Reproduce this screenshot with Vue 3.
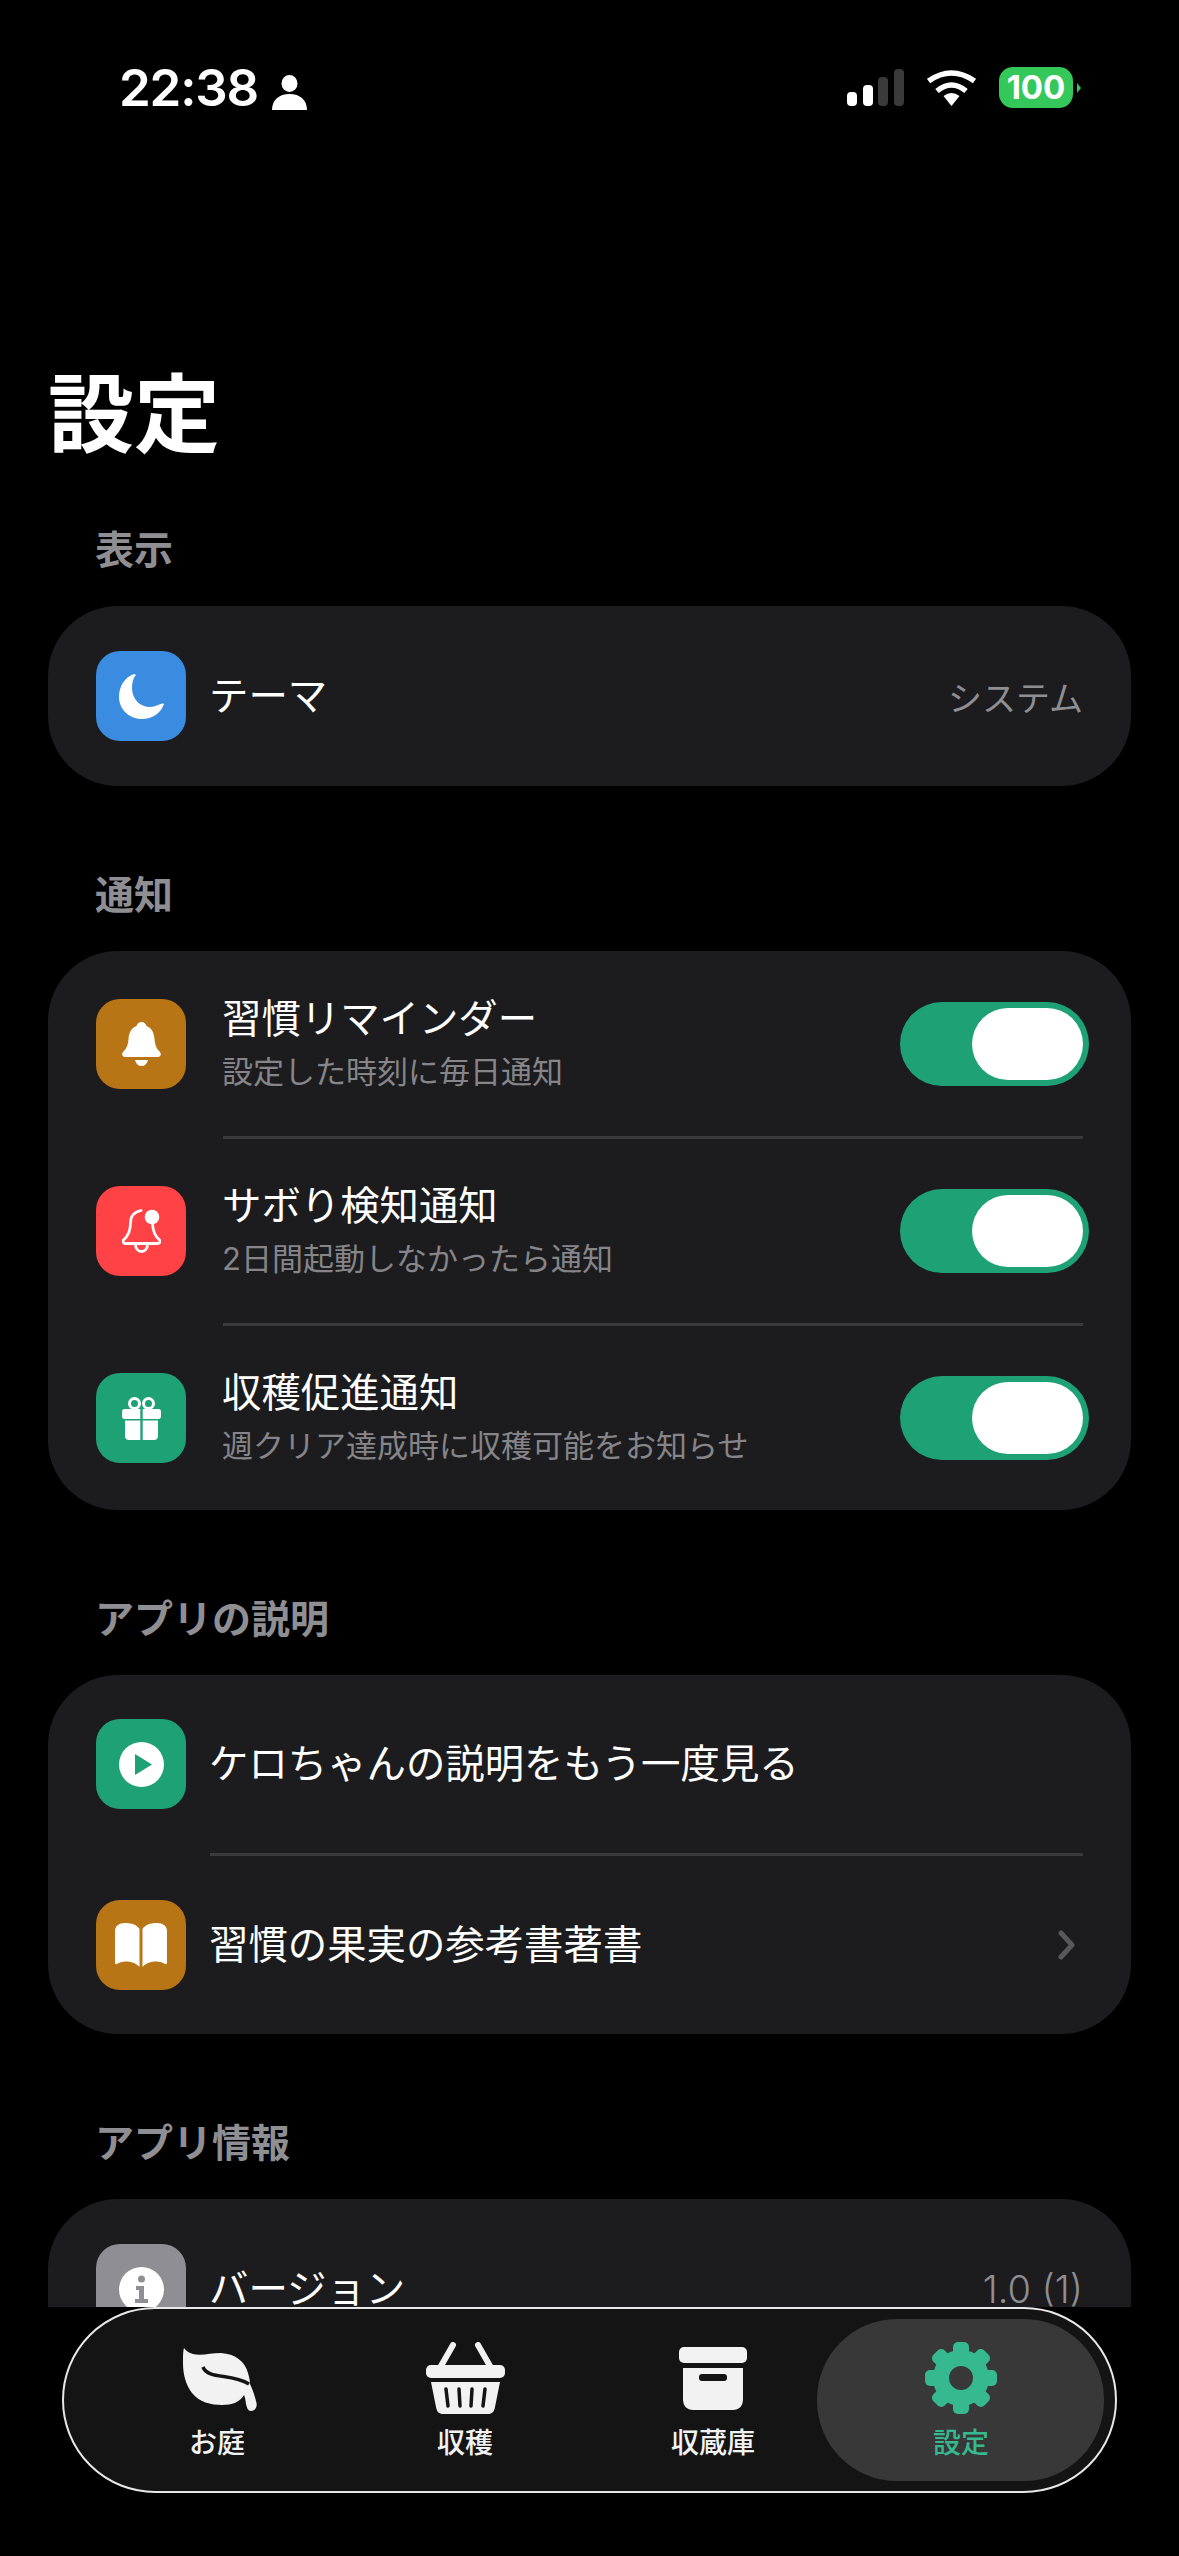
<script setup>
const gearTeeth = [0, 45, 90, 135, 180, 225, 270, 315];
</script>

<template>
  <div class="page">
    <div class="scroller">
      <!-- status bar -->
      <div class="status">
        <div class="status-left">
          <span class="time">22:38</span>
          <svg class="person" viewBox="0 0 35 35" width="35" height="35">
            <ellipse cx="17.5" cy="8.5" rx="8" ry="8.5" fill="#fff" />
            <path d="M0 35 C0 25 7 19 17.5 19 C28 19 35 25 35 35 Z" fill="#fff" />
          </svg>
        </div>
        <div class="status-right">
          <div class="signal">
            <i class="bar on" style="height: 14px"></i>
            <i class="bar on" style="height: 21px"></i>
            <i class="bar" style="height: 29px"></i>
            <i class="bar" style="height: 37px"></i>
          </div>
          <svg class="wifi" viewBox="0 0 51 36" width="51" height="36">
            <path d="M2.5 11 Q25.5 -5 48.500 11" fill="none" stroke="#fff" stroke-width="5.500" />
            <path d="M11 21 Q25.5 9 40 21" fill="none" stroke="#fff" stroke-width="5.500" />
            <path d="M25.5 36 L17.5 26 Q25.5 20 33.500 26 Z" fill="#fff" />
          </svg>
          <div class="battery">100</div>
          <svg class="battery-nub" viewBox="0 0 4 10" width="4" height="10">
            <path d="M0 0 L4 5 L0 10 Z" fill="#34c759" />
          </svg>
        </div>
      </div>

      <h1 class="title">設定</h1>

      <section>
        <h2 class="section-label">表示</h2>
        <div class="card">
          <div class="row row-tall">
            <div class="tile blue">
              <svg viewBox="0 0 45 45" width="45" height="45">
                <path d="M15 0 C6 3 0 12 0 23 C0 35 10 45 23 45 C33 45 42 39 45 30 C43 28 38 33 31 33 C21 33 13 25 13 14 C13 9 14 4 17 1 C16 0 15 0 15 0 Z" fill="#fff" />
              </svg>
            </div>
            <span class="label">テーマ</span>
            <span class="value">システム</span>
          </div>
        </div>
      </section>

      <section>
        <h2 class="section-label">通知</h2>
        <div class="card card-notify">
          <div class="row row-toggle">
            <div class="tile amber">
              <svg viewBox="0 0 39 44" width="39" height="44">
                <path d="M19.5 0 C22 0 24 2 24.500 4 C30 6 32 11 32.500 17 C33 24 35 27 38 30 C39.500 32 39 35 36 35 L3 35 C0 35 -0.500 32 1 30 C4 27 6 24 6.500 17 C7 11 9 6 14.500 4 C15 2 17 0 19.500 0 Z" fill="#fff" />
                <path d="M13 38 L26 38 C25 42 22.500 44 19.500 44 C16.500 44 14 42 13 38 Z" fill="#fff" />
              </svg>
            </div>
            <div class="text-stack">
              <span class="label">習慣リマインダー</span>
              <span class="sub">設定した時刻に毎日通知</span>
            </div>
            <div class="toggle"><i class="thumb"></i></div>
          </div>
          <div class="divider divider-wide"></div>
          <div class="row row-toggle">
            <div class="tile red">
              <svg viewBox="0 0 39 44" width="39" height="44">
                <path d="M19 1.500 C12 3 8.500 8 8.500 14 C8.500 22 5 28 1.500 31 C0.500 32 1 34.500 3 34.500 L36 34.500 C38 34.500 38.500 32 37.500 31 C34 28 31 23 30.500 15" fill="none" stroke="#fff" stroke-width="2.800" stroke-linecap="round" />
                <path d="M13.500 35 C13.500 39.500 16 42.500 19.500 42.500 C23 42.500 25.500 39.500 25.500 35" fill="none" stroke="#fff" stroke-width="2.800" />
                <circle cx="30" cy="8" r="7.300" fill="#fff" />
              </svg>
            </div>
            <div class="text-stack">
              <span class="label">サボり検知通知</span>
              <span class="sub">2日間起動しなかったら通知</span>
            </div>
            <div class="toggle"><i class="thumb"></i></div>
          </div>
          <div class="divider divider-wide"></div>
          <div class="row row-toggle">
            <div class="tile green">
              <svg viewBox="0 0 39 43" width="39" height="43">
                <circle cx="12.500" cy="6.500" r="5" fill="none" stroke="#fff" stroke-width="3" />
                <circle cx="26.500" cy="6.500" r="5" fill="none" stroke="#fff" stroke-width="3" />
                <path d="M2.500 12 H18.300 V22 H2.500 C1 22 0 21 0 19.500 V14.500 C0 13 1 12 2.500 12 Z" fill="#fff" />
                <path d="M20.700 12 H36.500 C38 12 39 13 39 14.500 V19.500 C39 21 38 22 36.500 22 H20.700 Z" fill="#fff" />
                <path d="M3 23.500 H18.300 V43 H7 C4.500 43 3 41.500 3 39 Z" fill="#fff" />
                <path d="M20.700 23.500 H36 V39 C36 41.500 34.500 43 32 43 H20.700 Z" fill="#fff" />
              </svg>
            </div>
            <div class="text-stack">
              <span class="label">収穫促進通知</span>
              <span class="sub">週クリア達成時に収穫可能をお知らせ</span>
            </div>
            <div class="toggle"><i class="thumb"></i></div>
          </div>
        </div>
      </section>

      <section>
        <h2 class="section-label">アプリの説明</h2>
        <div class="card">
          <div class="row">
            <div class="tile green">
              <svg viewBox="0 0 45 45" width="45" height="45">
                <circle cx="22.500" cy="22.500" r="22.500" fill="#fff" />
                <path d="M16 12 L33 22.500 L16 33 Z" fill="#1fa176" />
              </svg>
            </div>
            <span class="label">ケロちゃんの説明をもう一度見る</span>
          </div>
          <div class="divider"></div>
          <div class="row">
            <div class="tile amber">
              <svg viewBox="0 0 52 44" width="52" height="44">
                <path d="M0 8 C0 3 4 0 10 0 C17 0 22 2 24.500 6 V44 C21 40 16 38.500 11 38.500 C7 38.500 4 39.500 2 41 C1 41.500 0 41 0 39.500 Z" fill="#fff" />
                <path d="M52 8 C52 3 48 0 42 0 C35 0 30 2 27.500 6 V44 C31 40 36 38.500 41 38.500 C45 38.500 48 39.500 50 41 C51 41.500 52 41 52 39.500 Z" fill="#fff" />
              </svg>
            </div>
            <span class="label">習慣の果実の参考書著書</span>
            <svg class="chevron" viewBox="0 0 17 30" width="17" height="30">
              <path d="M3 3 L14 15 L3 27" fill="none" stroke="#58585c" stroke-width="5" stroke-linecap="round" stroke-linejoin="round" />
            </svg>
          </div>
        </div>
      </section>

      <section>
        <h2 class="section-label">アプリ情報</h2>
        <div class="card">
          <div class="row row-tall">
            <div class="tile gray">
              <svg viewBox="0 0 45 45" width="45" height="45">
                <circle cx="22.500" cy="22.500" r="22.500" fill="#fff" />
                <circle cx="22.500" cy="12" r="3.500" fill="#8e8e93" />
                <path d="M17 19 H25 V32 H29 V36 H16 V32 H20 V23 H17 Z" fill="#8e8e93" />
              </svg>
            </div>
            <span class="label">バージョン</span>
            <span class="value value-num">1.0 (1)</span>
          </div>
        </div>
      </section>
    </div>

    <!-- bottom tab bar -->
    <nav class="tabbar">
      <div class="tab">
        <svg class="icon-leaf" viewBox="0 0 74 64" width="74" height="64">
          <path d="M1 1 C3 4 6 6 10 7 C18 9 28 6 38 6 C52 7 62 14 65 26 C66 30 67 33 67 37 C70 43 72 50 73.500 56 C74.500 61 71 64 68 64 C65 64 64 61 63 57 C62.500 53 62 50 61 48 C57 55 49 58 39 58 C28 58 16 55 9 46 C3 38 0 28 0 16 C0 10 0 4 1 1 Z" fill="#f2f2f2" />
          <path d="M20 20 C25 33 48 26 66 37" fill="none" stroke="#141414" stroke-width="3.500" />
        </svg>
        <span class="tab-name">お庭</span>
      </div>
      <div class="tab">
        <svg viewBox="0 0 79 72" width="79" height="72">
          <path d="M27 3 L15 24 M52 3 L64 24" stroke="#f2f2f2" stroke-width="6" stroke-linecap="round" />
          <rect x="0" y="23" width="79" height="13" rx="5" fill="#f2f2f2" />
          <path d="M5 40 H74 L69 65 C68 70 66 72 62 72 H17 C13 72 11 70 10 65 Z" fill="#f2f2f2" />
          <path d="M20 47 L22 64 M33 47 L34 64 M46 47 L45 64 M59 47 L57 64" stroke="#141414" stroke-width="3.500" stroke-linecap="round" />
        </svg>
        <span class="tab-name">収穫</span>
      </div>
      <div class="tab">
        <svg class="icon-box" viewBox="0 0 68 63" width="68" height="63">
          <rect x="0" y="0" width="68" height="16" rx="5" fill="#f2f2f2" />
          <path d="M4 21 H64 V52 C64 59 60 63 54 63 H14 C8 63 4 59 4 52 Z" fill="#f2f2f2" />
          <rect x="20" y="27" width="28" height="7" rx="3" fill="#141414" />
        </svg>
        <span class="tab-name">収蔵庫</span>
      </div>
      <div class="tab active">
        <svg viewBox="0 0 72 72" width="72" height="72">
          <circle cx="36" cy="36" r="20" fill="none" stroke="#36b98e" stroke-width="16" />
          <rect v-for="deg in gearTeeth" :key="deg" x="28" y="0" width="16" height="20" rx="5" fill="#36b98e" :transform="`rotate(${deg} 36 36)`" />
        </svg>
        <span class="tab-name">設定</span>
      </div>
    </nav>
  </div>
</template>

<style>
html, body {
  margin: 0;
  background: #000;
}
</style>

<style scoped>
.page {
  width: 1179px;
  height: 2556px;
  background: #000;
  color: #fff;
  overflow: hidden;
  font-family: "Inter", "Noto Sans CJK JP", sans-serif;
}

.scroller {
  height: 2307px;
  overflow: hidden;
  padding: 0 48px;
  box-sizing: border-box;
}

.status {
  display: flex;
  justify-content: space-between;
  align-items: center;
  height: 45px;
  padding: 65px 0 0 71px;
}

.status-left {
  display: flex;
  align-items: flex-end;
  gap: 14px;
}

.time {
  font-size: 51px;
  line-height: 45px;
  font-weight: 600;
  letter-spacing: -1.2px;
}

.status-right {
  display: flex;
  align-items: center;
  margin-right: 50px;
}

.signal {
  display: flex;
  align-items: flex-end;
  gap: 5.7px;
  height: 37px;
  margin-right: 22px;
}

.bar {
  display: block;
  width: 10px;
  border-radius: 4px;
  background: #3a3a3a;
}

.bar.on {
  background: #fff;
}

.wifi {
  margin-right: 22px;
}

.battery {
  width: 74px;
  height: 41px;
  border-radius: 14px;
  background: #34c759;
  font-size: 33px;
  line-height: 41px;
  font-weight: 700;
  text-align: center;
}

.battery-nub {
  margin-left: 4px;
}

.title {
  margin: 255px 0 62px;
  font-size: 86px;
  line-height: 100px;
  font-weight: 700;
}

.section-label {
  margin: 0 0 33px 47px;
  font-size: 39px;
  line-height: 46px;
  font-weight: 700;
  color: #8e8e93;
}

.card {
  margin-bottom: 86px;
  border-radius: 70px;
  background: #1c1c1e;
}

.card-notify {
  padding-top: 1px;
}

.row {
  display: flex;
  align-items: center;
  height: 178px;
  padding: 0 48px;
}

.row-tall {
  height: 180px;
}

.row-toggle {
  height: 184px;
  padding-right: 42px;
}

.tile {
  flex: none;
  display: flex;
  align-items: center;
  justify-content: center;
  width: 90px;
  height: 90px;
  margin-right: 23px;
  border-radius: 24px;
}

.row-toggle .tile {
  margin-right: 36px;
}

.blue { background: #3a8ce0; }
.amber { background: #b87515; }
.red { background: #ff4245; }
.green { background: #1fa176; }
.gray { background: #8e8e93; }

.label {
  flex: 1;
  font-size: 39.4px;
  line-height: 52px;
}

.value {
  font-size: 34px;
  color: #8e8e93;
}

.value-num {
  font-size: 38px;
  font-weight: 300;
}

.text-stack {
  flex: 1;
  display: flex;
  flex-direction: column;
  gap: 4px;
}

.text-stack .label {
  flex: none;
}

.sub {
  font-size: 31px;
  line-height: 46px;
  color: #85858a;
}

.toggle {
  flex: none;
  display: flex;
  justify-content: flex-end;
  align-items: center;
  width: 189px;
  height: 84px;
  padding: 0 6px;
  box-sizing: border-box;
  border-radius: 42px;
  background: #1fa176;
}

.thumb {
  display: block;
  width: 111px;
  height: 72px;
  border-radius: 36px;
  background: #fff;
}

.divider {
  height: 3px;
  margin: 0 48px 0 162px;
  background: #3a3a3c;
}

.divider-wide {
  margin-left: 175px;
}

.chevron {
  flex: none;
  margin-right: 8px;
}

.tabbar {
  position: relative;
  display: grid;
  grid-template-columns: repeat(4, 248px);
  justify-content: center;
  height: 186px;
  margin: 0 62px;
  padding-right: 1px;
  box-sizing: border-box;
  border: 2px solid #e8e8e8;
  border-radius: 93px;
  background: #141414;
}

.tab {
  position: relative;
  display: flex;
  flex-direction: column;
  align-items: center;
  justify-content: flex-end;
  height: 150px;
  gap: 13px;
  color: #f2f2f2;
}

.tab svg {
  position: relative;
}

.tab .icon-leaf {
  margin: 0 0 3px 6px;
}

.tab .icon-box {
  margin-bottom: 4px;
}

.tab.active {
  color: #36b98e;
}

.tab.active::before {
  content: "";
  position: absolute;
  top: 10px;
  bottom: -22px;
  left: -20px;
  right: -19px;
  border-radius: 80px;
  background: #383838;
}

.tab-name {
  position: relative;
  font-size: 28px;
  line-height: 32px;
  font-weight: 500;
}
</style>
